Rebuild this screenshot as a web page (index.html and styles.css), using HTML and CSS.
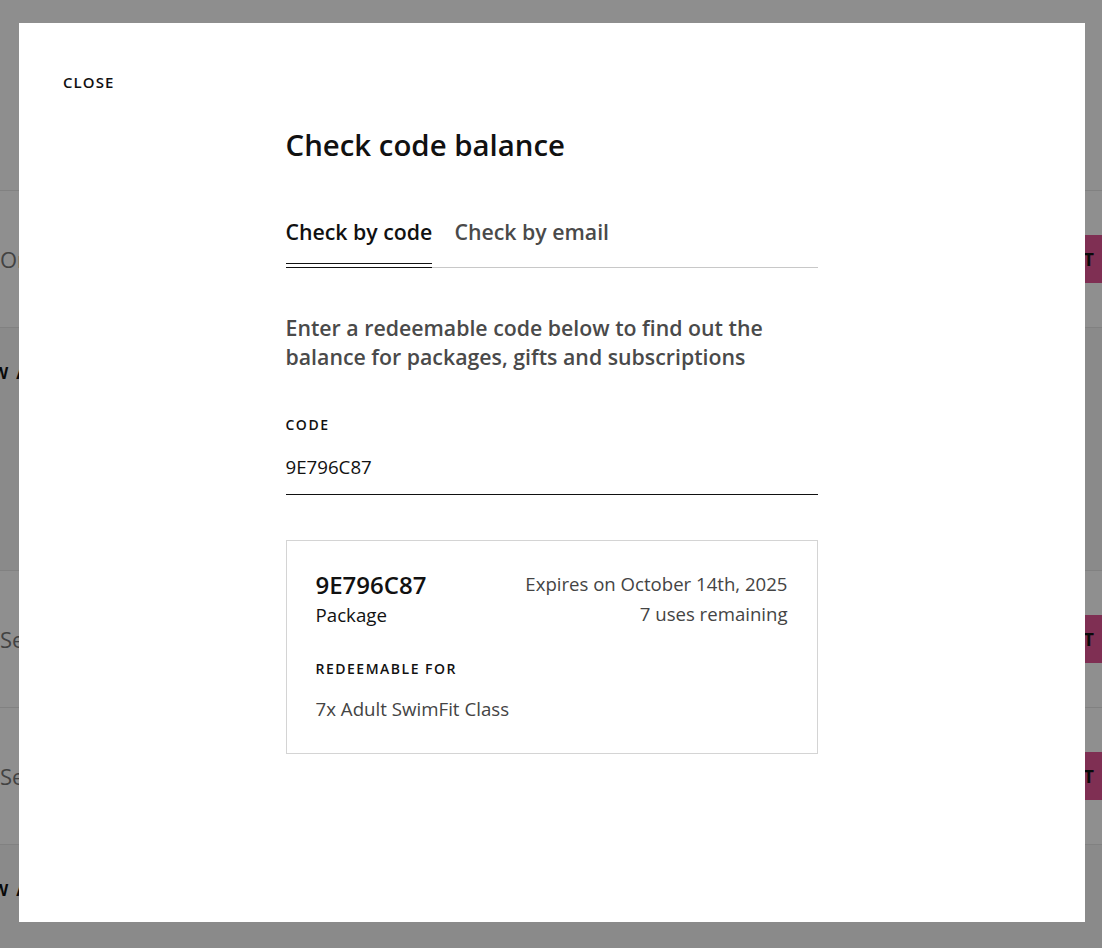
FILE: index.html
```html
<!DOCTYPE html>
<html lang="en">
<head>
<meta charset="utf-8">
<title>Check code balance</title>
<link rel="stylesheet" href="styles.css">
</head>
<body>
  <div class="page">
    <header class="page-header"></header>
    <section class="row row-card">
      <span class="row-title">Online Booking</span>
      <span class="row-btn">SELECT</span>
    </section>
    <section class="row row-section">
      <span class="section-title">VIEW ALL</span>
    </section>
    <section class="row row-card">
      <span class="row-title">Session</span>
      <span class="row-btn">SELECT</span>
    </section>
    <section class="row row-card">
      <span class="row-title">Session</span>
      <span class="row-btn">SELECT</span>
    </section>
    <section class="row row-section row-last">
      <span class="section-title">VIEW ALL</span>
    </section>
  </div>

  <div class="overlay">
    <div class="modal">
      <button class="close">CLOSE</button>
      <div class="modal-body">
        <h1 class="title">Check code balance</h1>
        <nav class="tabs">
          <span class="tab active">Check by code</span>
          <span class="tab">Check by email</span>
        </nav>
        <p class="intro">Enter a redeemable code below to find out the balance for packages, gifts and subscriptions</p>
        <label class="field">
          <span class="field-label">CODE</span>
          <span class="field-input">9E796C87</span>
        </label>
        <div class="result">
          <div class="result-head">
            <div class="result-main">
              <div class="result-code">9E796C87</div>
              <div class="result-type">Package</div>
            </div>
            <div class="result-meta">
              <div>Expires on October 14th, 2025</div>
              <div>7 uses remaining</div>
            </div>
          </div>
          <div class="result-label">REDEEMABLE FOR</div>
          <div class="result-item">7x Adult SwimFit Class</div>
        </div>
      </div>
    </div>
  </div>
</body>
</html>
```

FILE: styles.css
```css
* { box-sizing: border-box; }

html, body {
  margin: 0;
  padding: 0;
  height: 100%;
}

body {
  font-family: "Open Sans", "Liberation Sans", sans-serif;
  color: #111;
  background: #fff;
  overflow: hidden;
}

/* page behind the dialog */
.page {
  display: flex;
  flex-direction: column;
  height: 948px;
  overflow: hidden;
}

.page-header {
  height: 190px;
  background: #fefefe;
}

.row {
  display: flex;
  align-items: center;
  justify-content: space-between;
  border-top: 1px solid #e6e6e6;
}

.row-card {
  height: 137px;
  background: #fff;
}

.row-section {
  height: 243px;
  background: #f7f7f7;
  align-items: flex-start;
  padding-top: 34px;
}

.row-last {
  flex: 1;
}

.row-title {
  font-size: 22px;
  color: #777;
}

.section-title {
  font-size: 16px;
  font-weight: 700;
  letter-spacing: 2px;
  margin-left: -38px;
}

.row-btn {
  width: 120px;
  height: 48px;
  background: #e35494;
  color: #111;
  font-weight: 700;
  font-size: 18px;
  display: flex;
  align-items: center;
  justify-content: flex-end;
  padding-right: 8px;
}

/* dim layer and dialog */
.overlay {
  position: fixed;
  inset: 0;
  background: rgba(0, 0, 0, 0.44);
  display: flex;
  padding: 23px 17px 26px 19px;
}

.modal {
  flex: 1;
  background: #fff;
  position: relative;
  display: flex;
  justify-content: center;
}

.close {
  position: absolute;
  top: 49px;
  left: 44px;
  border: 0;
  background: none;
  padding: 0;
  font-family: inherit;
  font-size: 15px;
  font-weight: 600;
  letter-spacing: 1.1px;
  line-height: 20px;
  color: #111;
  cursor: pointer;
}

.modal-body {
  width: 532px;
  padding-top: 102px;
  margin-left: -1px;
}

.title {
  margin: 0;
  font-size: 29.4px;
  font-weight: 600;
  line-height: 40px;
  color: #111;
}

.tabs {
  display: flex;
  gap: 22px;
  margin-top: 52px;
  border-bottom: 1px solid #c8c8c8;
}

.tab {
  font-size: 21.3px;
  font-weight: 600;
  color: #4a4a4a;
  line-height: 30px;
  padding-bottom: 20px;
  position: relative;
}

.tab.active {
  color: #111;
}

.tab.active::after {
  content: "";
  position: absolute;
  left: 0;
  right: 0;
  bottom: -1px;
  height: 3px;
  border-top: 1px solid #111;
  border-bottom: 1px solid #111;
  background: #fff;
}

.intro {
  margin: 45px 0 0;
  font-size: 21.3px;
  font-weight: 600;
  line-height: 29px;
  color: #4a4a4a;
}

.field {
  display: flex;
  flex-direction: column;
  margin-top: 44px;
}

.field-label {
  font-size: 14px;
  font-weight: 600;
  letter-spacing: 1.5px;
  color: #111;
  line-height: 20px;
}

.field-input {
  margin-top: 19px;
  font-size: 18.7px;
  line-height: 26px;
  color: #111;
  padding-bottom: 14px;
  border-bottom: 1px solid #111;
}

.result {
  margin-top: 45px;
  border: 1px solid #d4d4d4;
  padding: 28px 29px 30px;
}

.result-head {
  display: flex;
  justify-content: space-between;
}

.result-code {
  font-size: 24px;
  font-weight: 600;
  line-height: 32px;
  color: #111;
}

.result-type {
  font-size: 18.7px;
  line-height: 28px;
  color: #111;
}

.result-meta {
  text-align: right;
  font-size: 18.6px;
  line-height: 30px;
  color: #444;
}

.result-label {
  margin-top: 30px;
  font-size: 14px;
  font-weight: 600;
  letter-spacing: 1.5px;
  line-height: 20px;
  color: #111;
}

.result-item {
  margin-top: 16px;
  font-size: 18.7px;
  line-height: 28px;
  color: #444;
}
```
